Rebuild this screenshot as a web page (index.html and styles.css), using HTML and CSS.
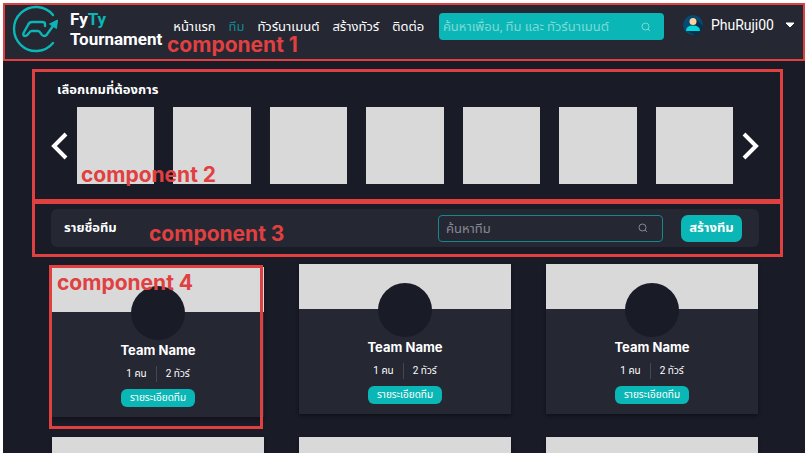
FILE: index.html
```html
<!DOCTYPE html>
<html lang="th">
<head>
<meta charset="utf-8">
<meta name="viewport" content="width=device-width, initial-scale=1">
<title>FyTy Tournament</title>
<link rel="stylesheet" href="styles.css">
</head>
<body>
<div class="page">
  <header class="topbar frame">
    <a class="brand" href="#">
      <svg class="brand-logo" viewBox="0 0 48 48" aria-hidden="true">
        <g fill="none" stroke="#0bb7b6" stroke-width="2.4" stroke-linecap="round" stroke-linejoin="round">
          <path d="M42 10A22 22 0 1 0 42 38"/>
          <path d="M34 21V19Q34 17 31 17H21Q18 17 17 20L12.500 28Q11.500 31 14.500 31Q16 31 18 28Q19 26 21 26H27Q28.500 26 29.500 28L31 30Q33 32 35.500 30L42 21"/>
        </g>
        <path d="M46.500 15L38.500 19L45.500 23.500Z" fill="#0bb7b6" stroke="#0bb7b6" stroke-width="1" stroke-linejoin="round"/>
      </svg>
      <span class="brand-name">Fy<span class="accent">Ty</span><br>Tournament</span>
    </a>
    <nav class="menu">
      <a href="#">หน้าแรก</a>
      <a href="#" class="current">ทีม</a>
      <a href="#">ทัวร์นาเมนต์</a>
      <a href="#">สร้างทัวร์</a>
      <a href="#">ติดต่อ</a>
    </nav>
    <label class="search search-filled">
      <input type="search" placeholder="ค้นหาเพื่อน, ทีม และ ทัวร์นาเมนต์" aria-label="ค้นหาเพื่อน, ทีม และ ทัวร์นาเมนต์">
      <svg viewBox="0 0 10 10" aria-hidden="true"><circle cx="4.5" cy="4.5" r="3.5"/><path d="M7 7l2 2"/></svg>
    </label>
    <button class="account" type="button">
      <svg class="avatar" viewBox="0 0 20 20" aria-hidden="true">
        <circle cx="10" cy="10" r="10" fill="#064a72"/>
        <path d="M12 3L20 11A10 10 0 0 1 12 20L4 16Z" fill="#052f4d"/>
        <path d="M3 16Q3 10.500 10 10.500T17 16Z" fill="#06d5d9"/>
        <circle cx="10" cy="6.500" r="3.500" fill="#ffd0a1"/>
      </svg>
      <span>PhuRuji00</span>
      <svg class="caret" viewBox="0 0 10 6" aria-hidden="true"><path d="M1 1H9L5 5Z" fill="#fff" stroke="#fff" stroke-linejoin="round"/></svg>
    </button>
    <span class="tag tag-topbar">component 1</span>
  </header>

  <main>
    <section class="games frame">
      <h2>เลือกเกมที่ต้องการ</h2>
      <div class="carousel">
        <button type="button" aria-label="ก่อนหน้า"><svg viewBox="0 0 17 28"><path d="M15 2L3 14L15 26"/></svg></button>
        <div class="tiles">
          <div></div><div></div><div></div><div></div><div></div><div></div><div></div>
        </div>
        <button type="button" aria-label="ถัดไป"><svg viewBox="0 0 17 28"><path d="M2 2L14 14L2 26"/></svg></button>
      </div>
      <span class="tag tag-games">component 2</span>
    </section>

    <section class="finder frame">
      <div class="toolbar">
        <h2>รายชื่อทีม</h2>
        <label class="search search-outline">
          <input type="search" placeholder="ค้นหาทีม" aria-label="ค้นหาทีม">
          <svg viewBox="0 0 10 10" aria-hidden="true"><circle cx="4.5" cy="4.5" r="3.500"/><path d="M7 7l2 2"/></svg>
        </label>
        <button class="create" type="button">สร้างทีม</button>
      </div>
      <span class="tag tag-finder">component 3</span>
    </section>

    <section class="teams">
      <article class="card marked">
        <div class="emblem"></div>
        <h3>Team Name</h3>
        <p><span>1 คน</span><span>2 ทัวร์</span></p>
        <button type="button">รายระเอียดทีม</button>
        <div class="marker frame"><span class="tag tag-card">component 4</span></div>
      </article>
      <article class="card">
        <div class="emblem"></div>
        <h3>Team Name</h3>
        <p><span>1 คน</span><span>2 ทัวร์</span></p>
        <button type="button">รายระเอียดทีม</button>
      </article>
      <article class="card">
        <div class="emblem"></div>
        <h3>Team Name</h3>
        <p><span>1 คน</span><span>2 ทัวร์</span></p>
        <button type="button">รายระเอียดทีม</button>
      </article>
      <article class="card"></article>
      <article class="card"></article>
      <article class="card"></article>
    </section>
  </main>
</div>
</body>
</html>
```
FILE: styles.css
```css
* {
  box-sizing: border-box;
}

body {
  margin: 0;
  padding: 3px 2px 2px 3px;
  height: 100vh;
  background: #fff;
  color: #fff;
  font-family: Roboto, "Noto Sans Thai", "Noto Sans", sans-serif;
  font-size: 13px;
}

h2, h3, p {
  margin: 0;
}

h2 {
  font-size: 13px;
  line-height: 20px;
}

button {
  border: 0;
  padding: 0;
  background: none;
  color: inherit;
  font: inherit;
}

a {
  color: inherit;
  text-decoration: none;
}

.page {
  height: 100%;
  overflow: hidden;
  background: #191b27;
}

.frame {
  position: relative;
  border: 3px solid #e04040;
}

.tag {
  position: absolute;
  z-index: 2;
  color: #e04040;
  font: 700 21px/24px Inter, sans-serif;
  white-space: nowrap;
}

.topbar {
  display: flex;
  align-items: flex-start;
  height: 58px;
  padding-left: 6px;
  padding-right: 8px;
  border-width: 2px;
  background: #252733;
}

.tag-topbar {
  left: 162px;
  top: 28px;
}

.brand {
  display: flex;
  gap: 11px;
}

.brand-logo {
  width: 48px;
  height: 48px;
}

.brand-name {
  padding-top: 4px;
  font-size: 17px;
  font-weight: 700;
  line-height: 20px;
}

.accent,
.current {
  color: #0bb7b6;
}

.menu {
  display: flex;
  gap: 13px;
  margin-left: 11px;
  padding-top: 11px;
  line-height: 22px;
  white-space: nowrap;
}

.menu .current {
  color: #14898d;
}

.search {
  display: flex;
  align-items: center;
  width: 225px;
  height: 27px;
  border-radius: 4px;
}

.search input {
  flex: 1;
  min-width: 0;
  padding: 0;
  border: 0;
  outline: 0;
  background: none;
  color: inherit;
  font: inherit;
}

.search svg {
  width: 10px;
  height: 10px;
  fill: none;
  stroke: currentColor;
}

.search ::placeholder {
  color: inherit;
  opacity: 1;
}

.search-filled {
  margin: 8px 0 0 auto;
  padding: 0 13px 0 4px;
  background: #0bb7b6;
  color: #7ed9d7;
}

.account {
  display: flex;
  align-items: center;
  gap: 8px;
  margin: 10px 0 0 19px;
  font-size: 14px;
  line-height: 20px;
}

.avatar {
  width: 20px;
  height: 20px;
}

.caret {
  width: 10px;
  height: 6px;
  margin-left: 3px;
}

main {
  padding: 8px 22px 0 29px;
}

.games {
  padding: 8px 21px 15px 16px;
}

.games h2 {
  padding-left: 6px;
}

.tag-games {
  left: 46px;
  top: 91px;
}

.carousel {
  display: flex;
  align-items: center;
  gap: 9px;
  margin-top: 7px;
}

.carousel svg {
  display: block;
  width: 17px;
  height: 28px;
  fill: none;
  stroke: #fff;
  stroke-width: 4;
}

.tiles {
  flex: 1;
  display: grid;
  grid-template-columns: repeat(7, 1fr);
  gap: 19px;
}

.tiles div {
  aspect-ratio: 1;
  background: #d9d9d9;
}

.finder {
  margin-top: -1px;
  padding: 5px 21px 7px 16px;
}

.tag-finder {
  left: 114px;
  top: 18px;
}

.toolbar {
  display: flex;
  align-items: center;
  height: 38px;
  padding: 0 17px 0 13px;
  border-radius: 6px;
  background: #252733;
}

.search-outline {
  margin-left: auto;
  padding: 0 14px 0 7px;
  border: 1px solid #14898d;
  color: #878993;
}

.create {
  width: 61px;
  height: 27px;
  margin-left: 18px;
  border-radius: 7px;
  background: #0bb7b6;
  font-weight: 700;
}

.teams {
  display: grid;
  grid-template-columns: repeat(3, 1fr);
  gap: 20px 35px;
  padding: 7px 25px 0 20px;
}

.card {
  position: relative;
  display: flex;
  flex-direction: column;
  align-items: center;
  align-self: start;
  height: 150px;
  padding-top: 19px;
  background: linear-gradient(#d9d9d9 45px, #252733 45px);
  box-shadow: 0 2px 3px #10121b;
}

.card.marked {
  margin-top: 3px;
}

.emblem {
  width: 54px;
  height: 54px;
  border-radius: 50%;
  background: #191b27;
}

.card h3 {
  font: 700 13px/20px Inter, sans-serif;
}

.card p {
  display: flex;
  margin-top: 6px;
  font-size: 10px;
  line-height: 16px;
}

.card p span + span {
  margin-left: 9px;
  padding-left: 9px;
  border-left: 1px solid #454753;
}

.card button {
  width: 74px;
  height: 18px;
  margin-top: 7px;
  border-radius: 6px;
  background: #0bb7b6;
  font-size: 10px;
  line-height: 18px;
}

.marker {
  position: absolute;
  inset: -2px 1px -12px -3px;
}

.tag-card {
  left: 5px;
  top: 3px;
}
```
